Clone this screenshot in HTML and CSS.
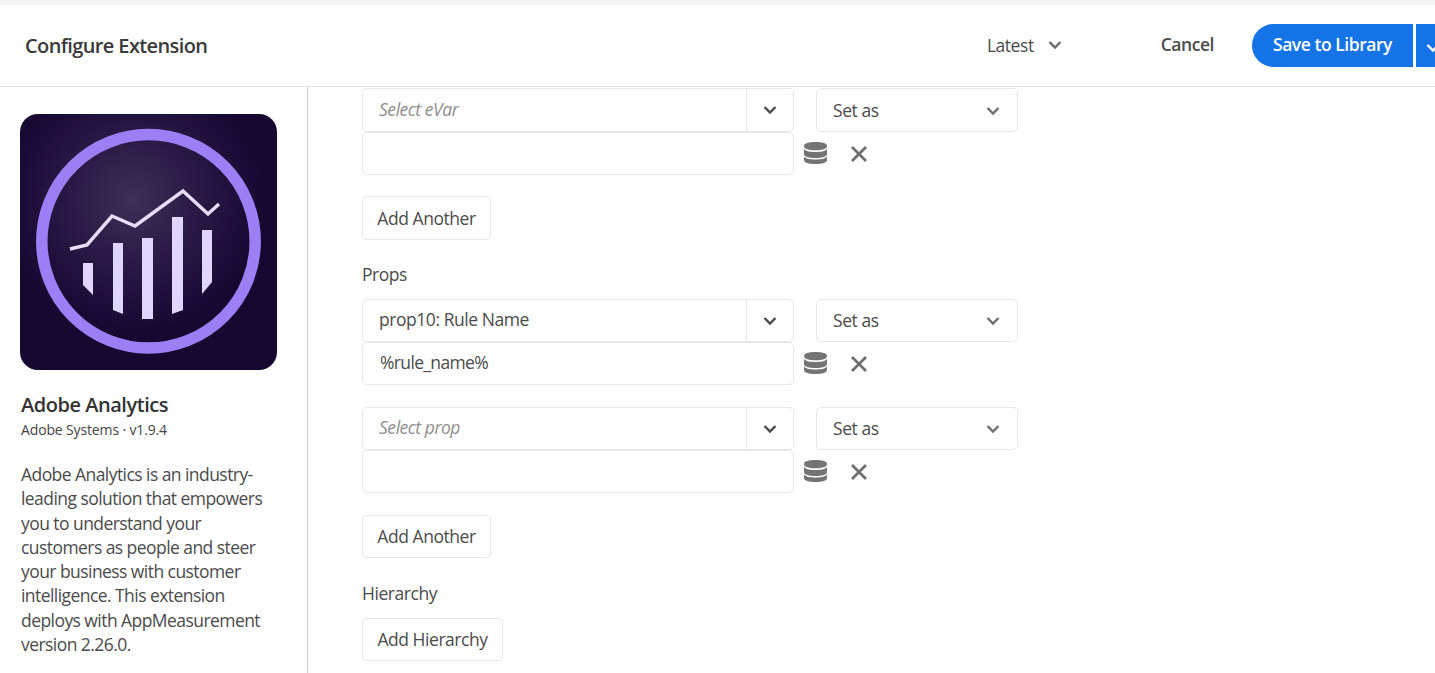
FILE: index.html
```html
<!DOCTYPE html>
<html lang="en">
<head>
<meta charset="utf-8">
<title>Configure Extension</title>
<link rel="stylesheet" href="styles.css">
</head>
<body>
<svg class="defs" width="0" height="0" aria-hidden="true">
  <symbol id="chev" viewBox="0 0 14 10"><path d="M1.500 2 7 7.500 12.500 2" fill="none" stroke="currentColor" stroke-width="2.400"/></symbol>
  <symbol id="db" viewBox="0 0 23 22"><path d="M0 4c0-3 5-4 11.500-4S23 1 23 4s-5 4.300-11.500 4.300S0 7 0 4Z" fill="currentColor"/><path d="M0 7c2 2.400 6.500 3 11.500 3S21 9.400 23 7v5c0 2.600-5 4-11.500 4S0 14.600 0 12Z" fill="currentColor"/><path d="M0 14.500c2 2.400 6.500 3 11.500 3s9.500-.6 11.500-3V18c0 2.800-5 4-11.500 4S0 20.800 0 18Z" fill="currentColor"/></symbol>
  <symbol id="x" viewBox="0 0 16 16"><path d="M1 1l14 14M15 1 1 15" fill="none" stroke="currentColor" stroke-width="2.800"/></symbol>
</svg>
<header class="topbar">
  <h1 class="title">Configure Extension</h1>
  <div class="version">Latest <svg class="chev-icon"><use href="#chev"/></svg></div>
  <button class="cancel">Cancel</button>
  <div class="save-group">
    <button class="save">Save to Library</button>
    <button class="save-more"><svg class="chev-icon"><use href="#chev"/></svg></button>
  </div>
</header>
<div class="layout">
  <aside class="sidebar">
    <svg class="logo" viewBox="0 0 257 256" role="img" aria-label="Adobe Analytics">
      <defs>
        <radialGradient id="glow" gradientUnits="userSpaceOnUse" cx="113" cy="86" r="135">
          <stop offset="0" stop-color="#3d2f57"/>
          <stop offset="0.6" stop-color="#241440"/>
          <stop offset="1" stop-color="#150730"/>
        </radialGradient>
      </defs>
      <rect width="257" height="256" rx="18" fill="url(#glow)"/>
      <circle cx="128.500" cy="127.300" r="106.700" fill="none" stroke="#9c7ff4" stroke-width="11.500"/>
      <path d="M50 135l17-4 25-29 23 10 48-35 25 23 11-10" fill="none" stroke="#e8dcfb" stroke-width="3.500"/>
      <g fill="#e0d5ff">
        <path d="M63 149h10v32l-10-10Z"/>
        <path d="M93 129h10v71l-10-4Z"/>
        <path d="M122 124h11v81h-11Z"/>
        <path d="M152 103h11v93l-11 4Z"/>
        <path d="M182 116h10v52l-10 12Z"/>
      </g>
    </svg>
    <h2 class="ext-name">Adobe Analytics</h2>
    <p class="ext-meta">Adobe Systems · v1.9.4</p>
    <p class="ext-desc">Adobe Analytics is an industry-leading solution that empowers you to understand your customers as people and steer your business with customer intelligence. This extension deploys with AppMeasurement version 2.26.0.</p>
  </aside>
  <main class="main">
    <div class="pair first">
      <div class="row">
        <div class="combo"><span class="combo-text placeholder">Select eVar</span><span class="combo-btn"><svg class="chev-icon"><use href="#chev"/></svg></span></div>
        <div class="setas">Set as <svg class="chev-icon"><use href="#chev"/></svg></div>
      </div>
      <div class="row">
        <div class="input"></div>
        <svg class="db-icon"><use href="#db"/></svg>
        <svg class="x-icon"><use href="#x"/></svg>
      </div>
    </div>
    <button class="btn add-first">Add Another</button>
    <div class="label props-label">Props</div>
    <div class="pair">
      <div class="row">
        <div class="combo"><span class="combo-text">prop10: Rule Name</span><span class="combo-btn"><svg class="chev-icon"><use href="#chev"/></svg></span></div>
        <div class="setas">Set as <svg class="chev-icon"><use href="#chev"/></svg></div>
      </div>
      <div class="row">
        <div class="input">%rule_name%</div>
        <svg class="db-icon"><use href="#db"/></svg>
        <svg class="x-icon"><use href="#x"/></svg>
      </div>
    </div>
    <div class="pair second">
      <div class="row">
        <div class="combo"><span class="combo-text placeholder">Select prop</span><span class="combo-btn"><svg class="chev-icon"><use href="#chev"/></svg></span></div>
        <div class="setas">Set as <svg class="chev-icon"><use href="#chev"/></svg></div>
      </div>
      <div class="row">
        <div class="input"></div>
        <svg class="db-icon"><use href="#db"/></svg>
        <svg class="x-icon"><use href="#x"/></svg>
      </div>
    </div>
    <button class="btn add-second">Add Another</button>
    <div class="label hier-label">Hierarchy</div>
    <button class="btn add-hier">Add Hierarchy</button>
  </main>
</div>
</body>
</html>
```
FILE: styles.css
```css
* { box-sizing: border-box; }
html, body { margin: 0; height: 673px; overflow: hidden; }
body {
  background: #fff;
  color: #4b4b4b;
  font-family: "Open Sans", "Liberation Sans", sans-serif;
  font-size: 17.500px;
  letter-spacing: -.45px;
  border-top: 5px solid #f5f5f5;
}
.defs { display: block; height: 0; }
button { font: inherit; letter-spacing: inherit; color: inherit; background: none; border: 0; padding: 0; }

.topbar {
  height: 83px;
  display: flex;
  align-items: center;
  border-top: 1px solid #e6e6e6;
  border-bottom: 1px solid #e4e4e4;
  padding-left: 25px;
  margin-top: -1px;
}
.title { margin: 0; font-size: 20px; font-weight: 600; color: #3a3a3a; letter-spacing: -.62px; }
.version { margin-left: auto; display: flex; align-items: center; gap: 14px; padding-bottom: 2px; }
.version .chev-icon { width: 14px; height: 10px; color: #6a6a6a; }
.cancel { margin-left: 99px; font-weight: 600; color: #4b4b4b; padding-bottom: 3px; }
.save-group { margin-left: 38px; display: flex; gap: 3px; width: 183px; overflow: hidden; flex: none; }
.save {
  background: #1473e6; color: #fff; font-weight: 600;
  width: 161px; height: 43px; border-radius: 22px 0 0 22px; flex: none; padding-bottom: 3px;
}
.save-more { background: #1473e6; color: #fff; width: 30px; height: 43px; flex: none; text-align: left; padding-left: 10px; }
.save-more .chev-icon { width: 14px; height: 10px; }

.layout { display: flex; height: 586px; }
.sidebar { width: 308px; flex: none; border-right: 1px solid #cfcfcf; padding: 27px 30px 0 20px; }
.logo { display: block; width: 257px; height: 256px; }
.ext-name { margin: 22px 0 0 1px; font-size: 20px; line-height: 26px; font-weight: 600; color: #333; letter-spacing: -.47px; }
.ext-meta { margin: 2px 0 0 1px; font-size: 14px; line-height: 20px; color: #444; letter-spacing: -.14px; }
.ext-desc { margin: 22px 0 0 1px; line-height: 24.250px; color: #4b4b4b; width: 245px; letter-spacing: -.56px; }

.main { padding: 1px 0 0 54px; flex: 1; }
.row { display: flex; align-items: center; }
.combo {
  width: 432px; height: 43px; display: flex; border: 1px solid #e8e8e8; border-radius: 5px;
}
.first .combo, .first .setas { height: 44px; }
.first .combo-text { line-height: 41px; }
.first .setas { padding-bottom: 0; }
.combo-text { flex: 1; padding-left: 16px; line-height: 39px; }
.placeholder { font-style: italic; color: #8e8e8e; }
.combo-btn { width: 47px; border-left: 1px solid #e8e8e8; display: flex; align-items: center; justify-content: center; }
.combo-btn .chev-icon { width: 14px; height: 10px; color: #4a4a4a; }
.setas {
  margin-left: 22px; width: 202px; height: 43px; border: 1px solid #e8e8e8; border-radius: 5px;
  display: flex; align-items: center; justify-content: space-between; padding: 0 17px 2px 16px;
}
.setas .chev-icon { width: 14px; height: 10px; color: #6e6e6e; margin-top: 2px; }
.input {
  width: 432px; height: 43px; border: 1px solid #e8e8e8; border-radius: 5px; padding-left: 17px; line-height: 39px; letter-spacing: -.65px;
}
.db-icon { width: 23px; height: 22px; margin: 0 0 1px 10px; color: #747474; }
.x-icon { width: 16px; height: 16px; margin: 0 0 0 24px; color: #6e6e6e; }
.btn {
  display: block; height: 44px; border: 1px solid #e8e8e8; border-radius: 4px; text-align: center; color: #4b4b4b;
}
.add-first { width: 129px; margin-top: 21px; }
.label { line-height: 24px; }
.props-label { margin-top: 22px; }
.pair.second { margin-top: 22px; }
.props-label + .pair { margin-top: 13px; }
.add-second { width: 129px; height: 43px; margin-top: 22px; padding-bottom: 2px; }
.hier-label { margin-top: 23px; }
.add-hier { width: 141px; height: 43px; margin-top: 13px; padding-bottom: 2px; }
```
